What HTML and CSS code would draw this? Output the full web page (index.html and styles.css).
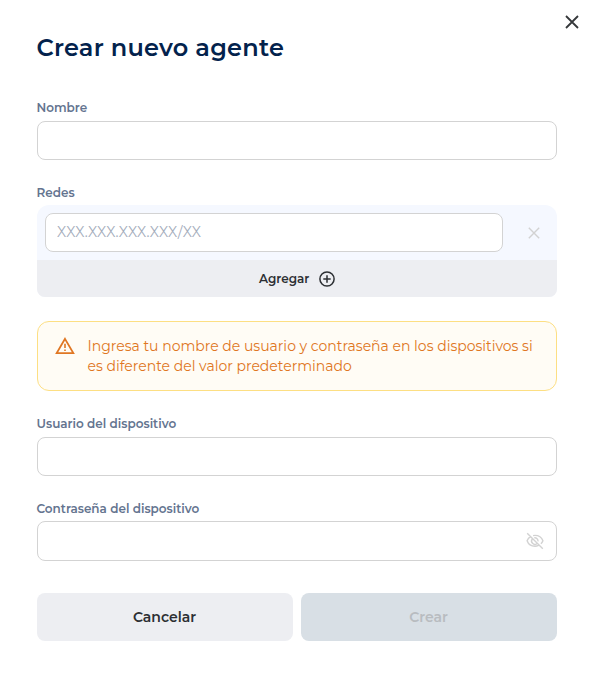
FILE: index.html
```html
<!DOCTYPE html>
<html lang="es">
<head>
<meta charset="utf-8">
<title>Crear nuevo agente</title>
<link rel="stylesheet" href="styles.css">
</head>
<body>
<main class="dialog">
  <button class="close" type="button" aria-label="Cerrar">
    <svg width="14" height="14" viewBox="0 0 14 14"><path d="M1 1l12 12M13 1L1 13"/></svg>
  </button>
  <h1 class="title">Crear nuevo agente</h1>
  <form class="form">
    <div class="field">
      <label class="label" for="name">Nombre</label>
      <input class="input" id="name" type="text">
    </div>
    <div class="field">
      <label class="label label-low" for="network">Redes</label>
      <div class="networks">
        <div class="network-row">
          <input class="input network-input" id="network" type="text" placeholder="XXX.XXX.XXX.XXX/XX">
          <button class="remove" type="button" aria-label="Quitar">
            <svg width="12" height="12" viewBox="0 0 12 12"><path d="M.8.8l10.4 10.4M11.2.8L.8 11.2"/></svg>
          </button>
        </div>
        <button class="add" type="button">
          <span>Agregar</span>
          <svg width="16" height="16" viewBox="0 0 16 16"><circle cx="8" cy="8" r="7.1"/><path d="M8 4.3v7.4M4.3 8h7.4"/></svg>
        </button>
      </div>
    </div>
    <div class="alert">
      <svg class="warning" width="20" height="18" viewBox="0 0 20 18"><path d="M10 1.900L18.300 16.100H1.700z"/><path class="mark" d="M10 6.800v4.200M10 12.400v1.700"/></svg>
      <p class="message">Ingresa tu nombre de usuario y contraseña en los dispositivos si es diferente del valor predeterminado</p>
    </div>
    <div class="field">
      <label class="label" for="user">Usuario del dispositivo</label>
      <input class="input" id="user" type="text">
    </div>
    <div class="field">
      <label class="label label-low" for="password">Contraseña del dispositivo</label>
      <div class="password">
        <input class="input password-input" id="password" type="password">
        <svg class="eye" width="18" height="18" viewBox="0 0 18 18"><path d="M5 4.300C3.100 5.200 1.700 6.800 1.100 8.700 2.300 12 5.400 14.200 9 14.200c1.300 0 2.500-.3 3.600-.8M7.100 3.600C7.700 3.500 8.300 3.400 9 3.400c3.600 0 6.700 2.100 7.900 5.300-.4 1.200-1.100 2.200-2 3.100M6.200 7.100a3.300 3.300 0 0 0 4.600 4.600M8.300 5.800a3.200 3.200 0 0 1 3.700 3.600M1.200 1.200l15.600 15.600"/></svg>
      </div>
    </div>
    <div class="actions">
      <button class="button cancel" type="button">Cancelar</button>
      <button class="button create" type="submit" disabled>Crear</button>
    </div>
  </form>
</main>
</body>
</html>
```

FILE: styles.css
```css
* { box-sizing: border-box; }
body {
  margin: 0;
  background: #fff;
  color: #2c2f33;
  font-family: Montserrat, Inter, sans-serif;
}
button, input { font: inherit; color: inherit; }
button { border: 0; padding: 0; }
svg { display: block; flex: none; fill: none; stroke: currentColor; }
.dialog { position: relative; height: 677px; padding: 32px 37px 0; }
.close { position: absolute; top: 15px; right: 15px; background: none; color: #35383a; }
.close svg { stroke-width: 1.8; }
.title { margin: 0 0 36px -.5px; font-size: 24px; line-height: 32px; font-weight: 600; letter-spacing: .24px; color: #03224c; }
.field { margin-bottom: 24px; }
.label { display: block; height: 21px; margin-left: -.5px; padding-top: 1px; font-size: 12px; line-height: 14px; font-weight: 600; color: #64748f; }
.label-low { padding-top: 2px; }
.input { display: block; width: 100%; height: 39px; border: 1px solid #d3d3d3; border-radius: 8px; background: #fff; padding: 0 12px; outline: 0; }
.networks { height: 92px; border-radius: 12px 12px 8px 8px; background: #f5f8ff; overflow: hidden; }
.network-row { height: 55px; display: flex; align-items: center; padding: 0 8px; }
.network-input { width: 458px; font-size: 14px; letter-spacing: .26px; padding: 0 11px 1px; }
.network-input::placeholder { color: #a3acbb; opacity: 1; }
.remove { margin-left: 25px; background: none; color: #d2d2d2; }
.remove svg { stroke-width: 1.4; }
.add { width: 100%; height: 37px; display: flex; align-items: center; justify-content: center; gap: 9.5px; background: #edeef2; font-size: 12px; font-weight: 600; }
.add svg { stroke-width: 1.5; }
.alert { display: flex; height: 70px; margin-bottom: 25px; padding: 14px 17px; border: 1px solid #fddf83; border-radius: 12px; background: #fffcf5; color: #e07622; }
.warning { margin-top: 1px; stroke-width: 1.8; }
.warning .mark { stroke-width: 1.6; }
.message { margin: 0 0 0 12.5px; font-size: 14px; line-height: 20px; }
.password { position: relative; }
.password-input { height: 40px; padding-right: 42px; }
.eye { position: absolute; top: 11px; right: 13px; color: #d2d2d2; stroke-width: 1.4; }
.actions { display: flex; gap: 8px; margin-top: 32px; }
.button { flex: 1; height: 48px; padding-right: 1px; border-radius: 8px; font-size: 14px; font-weight: 600; }
.cancel { background: #edeef2; }
.create { background: #d8dfe5; color: #b8bcc0; }
```
